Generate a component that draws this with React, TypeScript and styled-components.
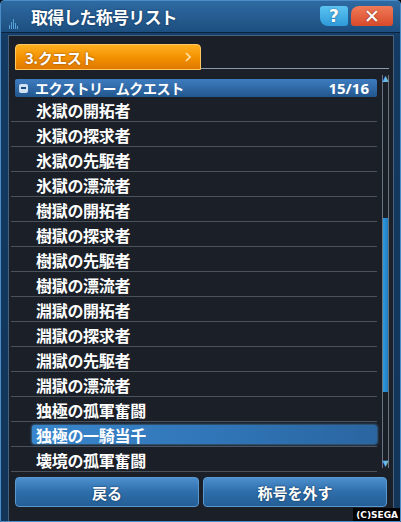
import React from "react";
import styled, { createGlobalStyle } from "styled-components";

const GlobalStyle = createGlobalStyle`
  html, body {
    margin: 0;
    padding: 0;
    background: #000;
  }
  body {
    font-family: "Noto Sans CJK JP", "Noto Sans", sans-serif;
  }
`;

const Window = styled.div`
  position: relative;
  width: 401px;
  height: 522px;
  box-sizing: border-box;
  background: linear-gradient(#1f5688, #133a62 40px, #123558);
  border: 1px solid #4a8cc8;
  border-radius: 4px 4px 0 0;
  display: flex;
  flex-direction: column;
  overflow: hidden;
`;

const TitleBar = styled.div`
  height: 31px;
  display: flex;
  align-items: center;
  padding: 0 7px 0 8px;
  background: linear-gradient(#2e6aa2, #1d4f80);
  border-bottom: 1px solid #0c2440;
`;

const TitleDeco = styled.div`
  width: 20px;
  height: 14px;
  margin-top: 10px;
  display: flex;
  align-items: flex-end;
  gap: 1px;
  span {
    width: 1px;
    background: #5aa0d8;
  }
`;

const Title = styled.div`
  flex: 1;
  color: #fff;
  font-weight: 700;
  font-size: 17px;
  letter-spacing: -0.8px;
  margin-left: 2px;
  text-shadow: 0 0 2px #0a2a4a;
`;

const TitleButton = styled.div<{ $kind: "help" | "close" }>`
  height: 20px;
  width: ${(p) => (p.$kind === "help" ? "28px" : "42px")};
  margin-left: 3px;
  margin-top: -2px;
  display: flex;
  align-items: center;
  justify-content: center;
  color: #fff;
  font-weight: 700;
  font-size: ${(p) => (p.$kind === "help" ? "17px" : "19px")};
  font-family: "DejaVu Sans", sans-serif;
  background: ${(p) =>
    p.$kind === "help"
      ? "linear-gradient(#5cc4f2, #2e9ad8)"
      : "linear-gradient(#f07a58, #d84a2a)"};
  border-radius: ${(p) => (p.$kind === "help" ? "3px 3px 3px 8px" : "8px 3px 3px 3px")};
  text-shadow: 0 0 2px rgba(0, 0, 0, 0.5);
`;

const Body = styled.div`
  flex: 1;
  margin: 2px 6px 0 7px;
  background: #1a1f28;
  border: 1px solid #46627e;
  border-bottom: none;
  display: flex;
  flex-direction: column;
  padding: 7px 4px 0 2px;
`;

const TabRow = styled.div`
  display: flex;
  align-items: flex-end;
  height: 27px;
  padding-left: 4px;
`;

const Tab = styled.div`
  width: 186px;
  height: 26px;
  box-sizing: border-box;
  padding: 0 9px 0 9px;
  display: flex;
  align-items: center;
  justify-content: space-between;
  color: #fff;
  font-weight: 700;
  font-size: 15px;
  letter-spacing: -0.5px;
  background: linear-gradient(#ffb020, #f29000 55%, #e07800);
  border: 1px solid #ffc860;
  border-radius: 4px 4px 0 0;
  text-shadow: 0 0 2px #7a3a00;
`;

const TabLine = styled.div`
  flex: 1;
  height: 1px;
  background: #8a9aaa;
  margin-bottom: 1px;
`;

const ListArea = styled.div`
  margin-top: 9px;
  display: flex;
  gap: 5px;
`;

const List = styled.div`
  flex: 1;
  display: flex;
  flex-direction: column;
`;

const GroupHeader = styled.div`
  height: 18px;
  margin-left: 4px;
  display: flex;
  align-items: center;
  padding: 0 8px 0 4px;
  background: linear-gradient(#3e7cc0, #22578e);
  border-radius: 2px;
  color: #fff;
  font-weight: 700;
  font-size: 14px;
  letter-spacing: -0.4px;
`;

const Minus = styled.span`
  width: 9px;
  height: 9px;
  border-radius: 2px;
  background: #cfe2f4;
  display: flex;
  align-items: center;
  justify-content: center;
  margin-right: 7px;
  &::after {
    content: "";
    width: 5px;
    height: 2px;
    background: #1d4d80;
  }
`;

const HeaderText = styled.span`
  flex: 1;
`;

const Count = styled.span`
  font-family: "Noto Sans", sans-serif;
  font-size: 15px;
  letter-spacing: 0;
`;

const Row = styled.div<{ $selected?: boolean }>`
  height: 25px;
  box-sizing: border-box;
  display: flex;
  align-items: center;
  padding-top: 1px;
  border-bottom: 1px solid #4a525c;
  padding-left: ${(p) => (p.$selected ? "0" : "25px")};
  color: #fff;
  font-weight: 700;
  font-size: 16px;
  letter-spacing: -0.3px;
`;

const Selected = styled.div`
  flex: 1;
  height: 19px;
  margin-left: 21px;
  padding-left: 4px;
  display: flex;
  align-items: center;
  border-radius: 2px;
  background: linear-gradient(90deg, #3a86cc, #2f73b4 60%, #2a65a0);
  box-shadow: 0 0 3px #5aa8e8;
`;

const ScrollBar = styled.div`
  position: relative;
  width: 7px;
  height: 393px;
  margin-top: -4px;
  border-left: 1px solid #6a7480;
  border-right: 1px solid #6a7480;
  box-sizing: border-box;
`;

const ScrollThumb = styled.div`
  position: absolute;
  left: 0;
  right: 0;
  top: 143px;
  height: 174px;
  background: linear-gradient(90deg, #2e9ae0, #1f7cc0);
`;

const ScrollArrow = styled.div<{ $down?: boolean }>`
  position: absolute;
  left: -2px;
  width: 9px;
  ${(p) => (p.$down ? "bottom: 0;" : "top: 0;")}
  color: #6ab8e8;
  font-size: 8px;
  line-height: 8px;
  text-align: center;
  font-family: "DejaVu Sans", sans-serif;
`;

const ButtonRow = styled.div`
  display: flex;
  gap: 4px;
  padding: 5px 2px 0 4px;
`;

const Button = styled.div`
  flex: 1;
  height: 30px;
  display: flex;
  align-items: center;
  justify-content: center;
  color: #fff;
  font-weight: 700;
  font-size: 15px;
  background: linear-gradient(#4c8fce, #2e6eaa 50%, #245e96);
  border: 1px solid #5a98d0;
  border-radius: 4px;
  box-sizing: border-box;
  text-shadow: 0 0 2px #0a2a4a;
`;

const Copyright = styled.div`
  position: absolute;
  right: 0;
  bottom: 0;
  background: #000;
  color: #fff;
  font-family: "DejaVu Sans", sans-serif;
  font-weight: 700;
  font-size: 9px;
  padding: 2px 2px 1px 3px;
`;

const items = [
  "氷獄の開拓者",
  "氷獄の探求者",
  "氷獄の先駆者",
  "氷獄の漂流者",
  "樹獄の開拓者",
  "樹獄の探求者",
  "樹獄の先駆者",
  "樹獄の漂流者",
  "淵獄の開拓者",
  "淵獄の探求者",
  "淵獄の先駆者",
  "淵獄の漂流者",
  "独極の孤軍奮闘",
  "独極の一騎当千",
  "壊境の孤軍奮闘",
];

export default function App() {
  return (
    <>
      <GlobalStyle />
      <Window>
        <TitleBar>
          <TitleDeco>
            {[4, 7, 10, 6, 3].map((h, i) => (
              <span key={i} style={{ height: h }} />
            ))}
          </TitleDeco>
          <Title>取得した称号リスト</Title>
          <TitleButton $kind="help">?</TitleButton>
          <TitleButton $kind="close">✕</TitleButton>
        </TitleBar>
        <Body>
          <TabRow>
            <Tab>
              <span>3.クエスト</span>
              <svg width="6" height="10" viewBox="0 0 6 10">
                <path d="M1 1 L5 5 L1 9" fill="none" stroke="#ffe2a8" strokeWidth="1.6" />
              </svg>
            </Tab>
            <TabLine />
          </TabRow>
          <ListArea>
            <List>
              <GroupHeader>
                <Minus />
                <HeaderText>エクストリームクエスト</HeaderText>
                <Count>15/16</Count>
              </GroupHeader>
              {items.map((t) =>
                t === "独極の一騎当千" ? (
                  <Row key={t} $selected>
                    <Selected>{t}</Selected>
                  </Row>
                ) : (
                  <Row key={t}>{t}</Row>
                )
              )}
            </List>
            <ScrollBar>
              <ScrollArrow>▲</ScrollArrow>
              <ScrollThumb />
              <ScrollArrow $down>▼</ScrollArrow>
            </ScrollBar>
          </ListArea>
          <ButtonRow>
            <Button>戻る</Button>
            <Button>称号を外す</Button>
          </ButtonRow>
        </Body>
        <Copyright>(C)SEGA</Copyright>
      </Window>
    </>
  );
}
